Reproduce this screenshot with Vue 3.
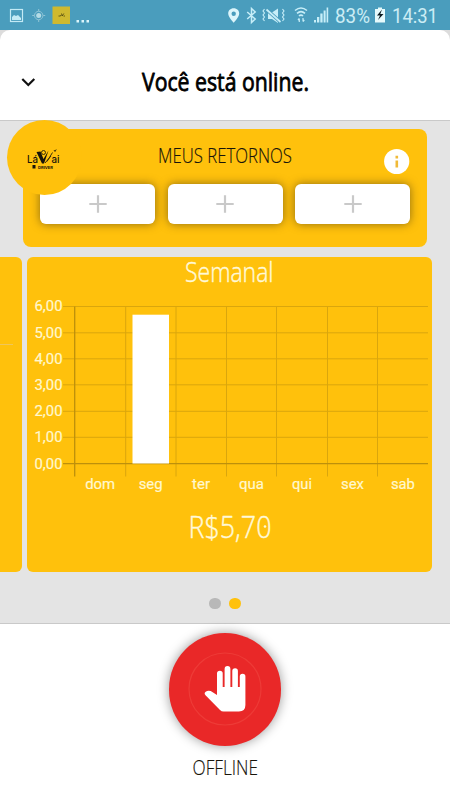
<script setup>
const slots = [1, 2, 3]
const days = ['dom', 'seg', 'ter', 'qua', 'qui', 'sex', 'sab']
const dayWidths = [30, 24, 18, 25, 20, 23, 24]
const ticks = [
  { label: '6,00', y: 49.5 },
  { label: '5,00', y: 75.8 },
  { label: '4,00', y: 101.8 },
  { label: '3,00', y: 127.8 },
  { label: '2,00', y: 154.3 },
  { label: '1,00', y: 180.3 },
]
const gridX = [98.7, 149, 199.5, 249.5, 300.5, 350.5]
</script>

<template>
  <div class="phone">
    <div class="status">
      <svg width="450" height="30" viewBox="0 0 450 30">
        <g fill="none" stroke="#c3eaf5">
          <rect x="10.5" y="9.5" width="12" height="12" stroke-width="1.2" />
          <path d="M12 20v-3l2-2 2 1 2-1 3 3v2z" fill="#c3eaf5" stroke="none" />
          <g stroke="#8fc4d6">
            <circle cx="38.7" cy="15.5" r="4.2" />
            <circle cx="38.7" cy="15.5" r="2.5" fill="#b5dce6" stroke="none" />
            <path d="M38.7 9v2M38.7 20v2M32.2 15.500h2M43.200 15.500h2" />
          </g>
        </g>
        <rect x="52.500" y="6.500" width="17.500" height="17.500" fill="#cfb92f" />
        <path d="M58.500 16h2l.5-1M61.500 13.500l.7 2.500 1.600-2.500M63.500 16h1.500" fill="none" stroke="#4a420f" stroke-width=".8" />
        <g fill="#dcf5fb">
          <rect x="76.500" y="20" width="2.500" height="2.500" />
          <rect x="81.500" y="20" width="2.500" height="2.500" />
          <rect x="86.500" y="20" width="2.500" height="2.500" />
          <path d="M233.700 8.300c-3.300 0-5.500 2.300-5.500 5.200 0 3.500 5.500 9.200 5.500 9.200s5.500-5.700 5.500-9.200c0-2.900-2.200-5.200-5.500-5.200zm0 3.200a2.200 2.200 0 1 1 0 4.400 2.200 2.200 0 0 1 0-4.400z" fill-rule="evenodd" />
          <path d="M268 12.500h4l6-4v14.500l-6-4h-4z" fill="#c7eef8" />
        </g>
        <g fill="none" stroke="#c7eef8" stroke-width="1.500">
          <path d="M247.200 12l8 7-3.700 3.500V8.500l3.700 3.500-8 7" />
          <path d="M266.500 9.500l14 12.500" stroke="#4a9dbd" stroke-width="3.600" />
          <path d="M266.500 9.500l14 12.500" stroke-width="1.700" />
          <path d="M264.500 9l-1.500 2 1.500 2-1.500 2 1.500 2-1.500 2 1.500 2M282.500 9l1.500 2-1.500 2 1.500 2-1.500 2 1.500 2-1.500 2" stroke-width="1.100" />
          <path d="M295 10.500q6-5 12 0M297 13.300q4-3.500 8 0M299 16q2-1.800 4 0" stroke-width="1.600" />
          <path d="M299.300 22v-3.500M298 20l1.300-1.500M303 18v3.500M304.300 20l-1.300 1.500" stroke-width="1.200" />
        </g>
        <g fill="#c7eef8">
          <rect x="314" y="20" width="2" height="2.500" />
          <rect x="317" y="17" width="2.300" height="5.500" />
          <rect x="320.300" y="13.500" width="2.300" height="9" />
          <rect x="323.600" y="10.500" width="2" height="12" />
          <rect x="326.600" y="7.500" width="1.600" height="15" />
          <path d="M378 7.500h4v1.500h3v13.500h-10V9h3z" fill="#e5fafc" />
        </g>
        <path d="M382 9.500l-5 6h3l-2 4.500 5.500-6h-3.200z" fill="#0b1a20" />
        <text class="roboto status-text" x="335" y="22.500" textLength="35" lengthAdjust="spacingAndGlyphs">83%</text>
        <text class="roboto status-text" x="392" y="22.500" textLength="46" lengthAdjust="spacingAndGlyphs">14:31</text>
      </svg>
    </div>

    <div class="header-back">
      <header class="header">
        <svg width="450" height="90" viewBox="0 0 450 90">
          <path d="M22.300 49l6 6 6-6" fill="none" stroke="#111" stroke-width="2.200" />
          <text class="title" x="142" y="61" textLength="167" lengthAdjust="spacingAndGlyphs">Você está online.</text>
        </svg>
      </header>
    </div>

    <main class="content">
      <section class="returns">
        <div class="returns-head">
          <svg width="404" height="55" viewBox="0 0 404 55">
            <text class="display heading" x="135" y="33.500" textLength="134" lengthAdjust="spacingAndGlyphs">MEUS RETORNOS</text>
            <circle cx="373.700" cy="32.500" r="12.600" fill="#fff" />
            <path d="M372.500 31.500h2.600v7h-2.600zM372.500 26.800h2.600v2.600h-2.600z" fill="#f0ba38" />
          </svg>
        </div>
        <div class="slots">
          <div v-for="s in slots" :key="s" class="slot">
            <svg width="18" height="18" viewBox="0 0 18 18">
              <path d="M9 .3v17.400M.3 9h17.400" stroke="#c9c9c9" stroke-width="2.200" />
            </svg>
          </div>
        </div>
        <div class="badge">
          <svg width="75" height="75" viewBox="0 0 75 75">
            <g fill="#17130a">
              <text class="logo" x="20" y="42.500" textLength="11" lengthAdjust="spacingAndGlyphs">Lá</text>
              <text class="logo" x="44.500" y="42.500" textLength="8" lengthAdjust="spacingAndGlyphs">ai</text>
              <path d="M29.500 32l4-.5 3 7.500 5-8.500-4.500 13h-2z" />
              <rect x="25.500" y="45" width="3" height="3.500" />
              <text class="tiny" x="31" y="48.500" textLength="15" lengthAdjust="spacingAndGlyphs">DRIVER</text>
            </g>
            <g fill="none" stroke="#29220a" stroke-width=".9">
              <circle cx="36.500" cy="32.500" r="2" />
              <path d="M40 41.500l5.500-9M38 43l6-7M47 30l1 1.500 1.200-2" />
            </g>
          </svg>
        </div>
      </section>

      <section class="carousel">
        <div class="panel previous"><i class="stroke"></i></div>
        <div class="panel current">
          <svg class="chart" width="405" height="315" viewBox="0 0 405 315">
            <text class="display soft semanal" x="158" y="24.500" textLength="88.500" lengthAdjust="spacingAndGlyphs">Semanal</text>
            <g stroke="#daa60d">
              <path v-for="t in ticks" :key="t.label" :d="`M36 ${t.y}H401`" />
              <path v-for="x in gridX" :key="x" :d="`M${x} 49.500V219.500`" />
            </g>
            <path d="M47.700 49.500V219.500M36 206.700H401" fill="none" stroke="#bd900c" stroke-width="1.300" />
            <rect x="105.500" y="57.700" width="36.500" height="148.800" fill="#fff" />
            <g class="roboto label">
              <text v-for="t in ticks" :key="t.label" x="7.500" :y="t.y + 4.800" textLength="28" lengthAdjust="spacingAndGlyphs">{{ t.label }}</text>
              <text x="7.500" y="211.500" textLength="28" lengthAdjust="spacingAndGlyphs">0,00</text>
              <text v-for="(d, i) in days" :key="d" :x="73.200 + i * 50.450" y="232" text-anchor="middle" :textLength="dayWidths[i]" lengthAdjust="spacingAndGlyphs">{{ d }}</text>
            </g>
            <text class="display soft amount" x="161.500" y="280.500" textLength="83" lengthAdjust="spacingAndGlyphs">R$5,70</text>
            <circle cx="238" cy="269.500" r="1.300" fill="#fff9d8" />
          </svg>
        </div>
      </section>

      <div class="dots"><i class="dot"></i><i class="dot active"></i></div>
    </main>

    <footer class="footer">
      <div class="power">
        <svg width="112" height="112" viewBox="0 0 112 112">
          <circle cx="56" cy="56" r="36" fill="none" stroke="#ed3b37" stroke-width="1.200" />
          <path d="M48 60V40.500a2.700 2.700 0 0 1 5.700 0V54h1.900V36a2.900 2.900 0 0 1 5.800 0v18h1.900V38a2.700 2.700 0 0 1 5.600 0v16h1.900V43.500a2.700 2.700 0 0 1 5.600 0V72q0 6.500-6.500 6.500H54.500q-2 0-3.500-1.500L36.500 62.300q-1.800-2 .2-3.600 2.300-1.700 5-.6L48 62z" fill="#fff" />
        </svg>
      </div>
      <svg class="offline" width="112" height="30" viewBox="0 0 112 30">
        <text class="display heading" x="23.500" y="20.500" textLength="65.500" lengthAdjust="spacingAndGlyphs">OFFLINE</text>
      </svg>
    </footer>
  </div>
</template>

<style>
body {
  margin: 0;
  background: #fff;
}
</style>

<style scoped>
.phone {
  width: 450px;
  height: 800px;
  display: flex;
  flex-direction: column;
  overflow: hidden;
  background: #fff;
}
svg {
  display: block;
}
.status {
  height: 30px;
  background: #4a9dbd;
}
.roboto {
  font-family: Roboto, sans-serif;
}
.display {
  font-family: "Open Sans", "Noto Sans", sans-serif;
  font-weight: 300;
}
.status-text {
  font-size: 19.500px;
  fill: #ccedf5;
}
.header-back {
  background: #dcdcdc;
}
.header {
  box-sizing: border-box;
  height: 91px;
  background: #fff;
  border-bottom: 1px solid #c9c9c9;
  border-radius: 10px 10px 0 0;
}
.title {
  font-family: "Open Sans", "Noto Sans", sans-serif;
  font-size: 25px;
  font-weight: 400;
  fill: #000;
  stroke: #000;
  stroke-width: 0.8px;
  stroke-linejoin: round;
}
.heading {
  font-size: 20.500px;
  fill: #18140a;
  stroke: #18140a;
  stroke-width: 0.15px;
}
.content {
  box-sizing: border-box;
  height: 503px;
  padding-top: 8px;
  background: #e4e4e4;
  border-bottom: 1px solid #c9c9c9;
}
.returns {
  position: relative;
  width: 404.500px;
  height: 118px;
  margin-left: 22.500px;
  background: #ffc10c;
  border-radius: 8px;
}
.slots {
  display: flex;
  gap: 12.500px;
  padding-left: 17.500px;
}
.slot {
  width: 115px;
  height: 39.500px;
  display: flex;
  align-items: center;
  justify-content: center;
  background: #fff;
  border-radius: 6px;
  box-shadow: 0 0 10px rgba(65, 50, 20, 0.6);
}
.badge {
  position: absolute;
  left: -15.500px;
  top: -9px;
  width: 75px;
  height: 75px;
  border-radius: 50%;
  background: #ffc10c;
}
.logo {
  font: 500 10px Inter, sans-serif;
}
.tiny {
  font: 700 4px Inter, sans-serif;
}
.carousel {
  display: flex;
  gap: 4.600px;
  margin-top: 9.700px;
}
.panel {
  height: 315px;
  background: #ffc10c;
}
.previous {
  width: 22.400px;
  border-radius: 0 6px 6px 0;
}
.stroke {
  display: block;
  width: 13px;
  height: 1px;
  margin-top: 87px;
  background: #efc65b;
}
.current {
  width: 405px;
  border-radius: 6px;
}
.chart {
  overflow: visible;
}
.soft {
  fill: #fff9d8;
  stroke: #fff9d8;
  stroke-width: 0.45px;
  stroke-linejoin: round;
}
.semanal {
  font-size: 27px;
}
.amount {
  font-size: 31px;
}
.label {
  font-size: 15px;
  fill: #fff8cf;
  stroke: #fff8cf;
  stroke-width: 0.2px;
}
.dots {
  display: flex;
  justify-content: center;
  gap: 8.500px;
  padding-top: 26px;
}
.dot {
  width: 11.500px;
  height: 11.500px;
  border-radius: 50%;
  background: #b8b8b8;
}
.active {
  background: #ffc10c;
}
.footer {
  display: flex;
  flex-direction: column;
  align-items: center;
  padding-top: 9px;
}
.power {
  width: 112.500px;
  height: 112.500px;
  border-radius: 50%;
  background: #e92828;
  box-shadow: 0 0 12px rgba(0, 0, 0, 0.4);
}
.offline {
  margin-top: 8px;
}
</style>
